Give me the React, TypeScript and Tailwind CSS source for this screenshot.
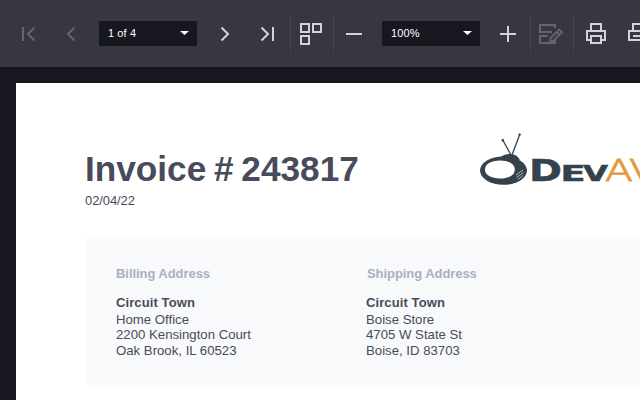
import type { ReactNode } from "react";

const Icon = ({ children, className = "", width = 24 }: { children: ReactNode; className?: string; width?: number }) => (
  <svg
    width={width}
    height={24}
    viewBox={`0 0 ${width} 24`}
    fill="none"
    stroke="currentColor"
    strokeWidth={2}
    className={`block shrink-0 ${className}`}
  >
    {children}
  </svg>
);

const Divider = ({ className = "" }: { className?: string }) => (
  <div className={`h-9 w-px shrink-0 bg-[#454558] ${className}`} />
);

const Select = ({ label, className = "" }: { label: string; className?: string }) => (
  <div className={`mb-px flex h-[25px] w-[98px] shrink-0 items-center justify-between bg-[#17171f] pl-[9px] pr-2 text-[11px] text-white ${className}`}>
    <span className="whitespace-pre tracking-[0.1px]">{label}</span>
    <svg width="9" height="4" viewBox="0 0 9 4" className="mb-px block" fill="currentColor">
      <path d="M0 0h9L4.5 4z" />
    </svg>
  </div>
);

const Address = ({ title, lines, titleClass = "" }: { title: string; lines: string[]; titleClass?: string }) => (
  <div className="w-[250px] shrink-0 text-[13.2px] text-[#484b59]">
    <div className={`h-[29px] text-[13px] font-bold leading-4 tracking-[-0.06px] text-[#aab0c1] ${titleClass}`}>{title}</div>
    <div className="h-[17px] text-[13px] font-bold leading-4 tracking-[0.1px]">Circuit Town</div>
    {lines.map((line) => (
      <div key={line} className="h-4 leading-4 first-of-type:h-4 nth-[3]:h-[15px]">{line}</div>
    ))}
  </div>
);

const Logo = () => (
  <svg width="170" height="60" viewBox="0 0 170 60" className="block shrink-0">
    <g stroke="#33424c" fill="none">
      <path d="M31 22 23 7.5M32 22 39.7 1.5" strokeWidth="1.3" />
      <circle cx="22.8" cy="7.2" r="0.9" fill="#33424c" />
      <circle cx="39.7" cy="1.6" r="0.8" fill="#33424c" />
    </g>
    <path d="M20 25Q23 21 30 21t10 6z" fill="#33424c" />
    <ellipse cx="23.5" cy="37.6" rx="23.5" ry="14.2" fill="#33424c" />
    <path d="M20 27.5c9 0 14.8 3.5 14.8 9S29 45.5 20 45.5 5 42 5 36.5s6-9 15-9z" fill="#fff" />
    <path d="m36 42 7-5M36.5 44.5l7-5M38 46.5l5-4" stroke="#aab0b5" strokeWidth="1" />
    <g fontFamily="'DejaVu Sans', sans-serif" fontWeight="700" fill="#33424c" stroke="#33424c" strokeWidth="0.5">
      <text x="49" y="48" fontSize="31" textLength="33" lengthAdjust="spacingAndGlyphs">D</text>
      <text x="80.5" y="48" fontSize="21.5" textLength="25" lengthAdjust="spacingAndGlyphs">E</text>
      <text x="103" y="48" fontSize="21.5" textLength="25" lengthAdjust="spacingAndGlyphs">V</text>
    </g>
    <g fontFamily="'DejaVu Sans', sans-serif" fontWeight="200" fill="#e39a3b" stroke="#e39a3b" strokeWidth="0.9">
      <text x="125" y="48" fontSize="31" textLength="28" lengthAdjust="spacingAndGlyphs">A</text>
      <text x="149" y="48" fontSize="31" textLength="28" lengthAdjust="spacingAndGlyphs">V</text>
    </g>
  </svg>
);

export default function App() {
  return (
    <div className="h-[400px] w-[640px] overflow-hidden bg-[#17171f] font-['Liberation_Sans',Arial,sans-serif]">
      <header className="flex h-[67px] items-center overflow-hidden bg-[#373740] pl-4 pt-px text-[#d2d2d9]">
        <Icon className="text-[#65656f]">
          <path d="M7 5v14M18.5 5.5 12 12l6.5 6.5" />
        </Icon>
        <Icon className="ml-5 text-[#65656f]">
          <path d="M14.5 5.5 8 12l6.5 6.5" />
        </Icon>
        <Select label="1 of 4" className="ml-[15px]" />
        <Icon className="ml-[15px]">
          <path d="m9.5 5.5 6.5 6.5-6.5 6.5" />
        </Icon>
        <Icon className="ml-4">
          <path d="m9.5 5.5 6.5 6.5-6.5 6.5M21 5v14" />
        </Icon>
        <Divider className="ml-[14px]" />
        <Icon className="ml-[8px]">
          <path d="M2 2h8v8H2zM14 2h8v8h-8zM2 14h8v8H2z" />
        </Icon>
        <Divider className="ml-[10px]" />
        <Icon className="ml-2">
          <path d="M4 12h16" />
        </Icon>
        <Select label="100%" className="ml-4" />
        <Icon className="ml-4">
          <path d="M4 12h16M12 4v16" />
        </Icon>
        <Divider className="ml-[10px]" />
        <Icon className="ml-[7px] text-[#65656f]" width={26}>
          <path d="M17 6V3H2v7h12M10 14H2v7h15v-4" />
          <path d="m12 19.5.6-3.5 8.6-8.6 2.8 2.8-8.6 8.6zM18.8 9.8l2.8 2.8" strokeWidth="1.8" />
        </Icon>
        <Divider className="ml-[9px]" />
        <Icon className="ml-[11px]" width={22}>
          <path d="M6 8V2h10v6M6 18H2V9h18v9h-4" />
          <path d="M6 14h10v7H6z" />
        </Icon>
        <Icon className="ml-5" width={22}>
          <path d="M6 8V2h10v6M16 18H2V9h18v9h-4M6 14h10" />
        </Icon>
      </header>
      <main className="ml-4 mt-4 h-[317px] bg-white text-[#484b59]">
        <div className="flex h-[154px] items-start pl-[69px]">
          <div className="w-[395px] shrink-0 pt-[65px]">
            <h1 className="whitespace-nowrap text-[35.2px] font-bold leading-[42px] [word-spacing:-2px]">Invoice # 243817</h1>
            <div className="mt-[3px] text-[13px] leading-4 tracking-[-0.1px]">02/04/22</div>
          </div>
          <div className="pt-[50px]"><Logo /></div>
        </div>
        <section className="ml-[71px] flex h-[148px] bg-[#f8f9fb] pl-[29px] pt-[29px]">
          <Address title="Billing Address" lines={["Home Office", "2200 Kensington Court", "Oak Brook, IL 60523"]} />
          <Address title="Shipping Address" titleClass="pl-px" lines={["Boise Store", "4705 W State St", "Boise, ID 83703"]} />
        </section>
      </main>
    </div>
  );
}
